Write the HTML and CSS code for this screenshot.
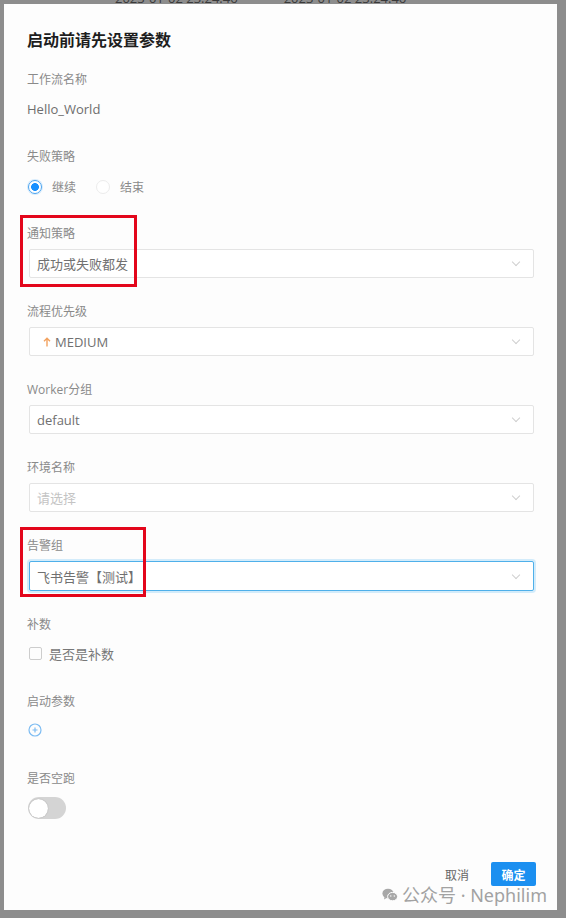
FILE: index.html
```html
<!DOCTYPE html>
<html lang="zh-CN">
<head>
    <meta charset="UTF-8">
    <meta name="viewport" content="width=device-width, initial-scale=1.0">
    <title>启动前请先设置参数</title>
    <link rel="stylesheet" href="styles.css">
</head>
<body>
    <div class="backdrop-row">
        <span class="backdrop-time">2023-01-02 23:24:46</span>
        <span class="backdrop-time">2023-01-02 23:24:46</span>
    </div>

    <div class="modal">
        <h2 class="modal-title">启动前请先设置参数</h2>

        <div class="field field-top">
            <div class="field-label">工作流名称</div>
            <div class="field-text">Hello_World</div>
        </div>

        <div class="field field-radio">
            <div class="field-label">失败策略</div>
            <div class="radio-group">
                <label class="radio checked"><span class="radio-dot"></span>继续</label>
                <label class="radio"><span class="radio-dot"></span>结束</label>
            </div>
        </div>

        <div class="field marked">
            <div class="field-label">通知策略</div>
            <div class="select">
                <span class="select-value">成功或失败都发</span>
                <span class="chevron"></span>
            </div>
            <div class="mark mark-notify"></div>
        </div>

        <div class="field">
            <div class="field-label">流程优先级</div>
            <div class="select">
                <span class="select-value">
                    <svg class="priority-icon" width="8" height="10" viewBox="0 0 8 10">
                        <path d="M4 1.2 V9.5 M1 4.2 L4 1.2 L7 4.2" fill="none" stroke="#f2a25f" stroke-width="1.4"/>
                    </svg>
                    MEDIUM
                </span>
                <span class="chevron"></span>
            </div>
        </div>

        <div class="field">
            <div class="field-label">Worker分组</div>
            <div class="select">
                <span class="select-value">default</span>
                <span class="chevron"></span>
            </div>
        </div>

        <div class="field">
            <div class="field-label">环境名称</div>
            <div class="select">
                <span class="select-value placeholder">请选择</span>
                <span class="chevron"></span>
            </div>
        </div>

        <div class="field marked">
            <div class="field-label">告警组</div>
            <div class="select focused">
                <span class="select-value">飞书告警【测试】</span>
                <span class="chevron"></span>
            </div>
            <div class="mark mark-alert"></div>
        </div>

        <div class="field field-compact">
            <div class="field-label">补数</div>
            <label class="checkbox"><span class="checkbox-box"></span>是否是补数</label>
        </div>

        <div class="field field-compact">
            <div class="field-label">启动参数</div>
            <div class="icon-row">
                <svg width="14" height="14" viewBox="0 0 14 14">
                    <circle cx="7" cy="7" r="6" fill="none" stroke="#7dbcf2" stroke-width="1.2"/>
                    <path d="M7 4.5 V9.5 M4.5 7 H9.5" stroke="#7dbcf2" stroke-width="1.2"/>
                </svg>
            </div>
        </div>

        <div class="field field-compact">
            <div class="field-label">是否空跑</div>
            <div class="switch"><span class="switch-knob"></span></div>
        </div>

        <div class="modal-footer">
            <button class="btn btn-text">取消</button>
            <button class="btn btn-primary">确定</button>
        </div>

        <div class="watermark">
            <svg width="16" height="14" viewBox="0 0 16 14">
                <ellipse cx="6" cy="5.5" rx="5.6" ry="4.8" fill="#a8a8a8"/>
                <path d="M2.5 9 L2 11.5 L5 9.8 Z" fill="#a8a8a8"/>
                <ellipse cx="10.6" cy="8.6" rx="5" ry="4.2" fill="#a8a8a8" stroke="#fff" stroke-width="1"/>
                <circle cx="8.8" cy="8" r="0.7" fill="#fff"/>
                <circle cx="12.3" cy="8" r="0.7" fill="#fff"/>
            </svg>
            <span>公众号 · Nephilim</span>
        </div>
    </div>
</body>
</html>
```

FILE: styles.css
```css
body {
    margin: 0;
    background-color: #8d8d8d;
    font-family: "Open Sans", "Noto Sans CJK SC", sans-serif;
    height: 918px;
    overflow: hidden;
}

.backdrop-row {
    height: 4px;
    overflow: hidden;
    display: flex;
    align-items: flex-end;
    gap: 46px;
    padding-left: 115px;
}

.backdrop-time {
    font-size: 13px;
    line-height: 12px;
    color: #3a3a3a;
    flex-shrink: 0;
}

.modal {
    position: relative;
    margin-left: 4px;
    width: 553px;
    height: 906px;
    box-sizing: border-box;
    background-color: #fdfdfd;
    padding: 24px 23px 0 25px;
    display: flex;
    flex-direction: column;
}

.modal-title {
    margin: 0 0 16px -2px;
    font-size: 16px;
    line-height: 24px;
    font-weight: bold;
    color: #1e1e1e;
}

.field {
    position: relative;
    margin-bottom: 22px;
}

.field-top {
    margin-bottom: 26px;
}

.field-compact {
    margin-bottom: 27px;
}

.field-label {
    margin-left: -2px;
    padding-top: 2px;
    font-size: 12px;
    line-height: 20px;
    color: #8a8a8a;
    margin-bottom: 5px;
}

.field-top .field-label {
    margin-bottom: 9px;
}

.field-radio .field-label {
    margin-bottom: 10px;
}

.field-compact .field-label {
    margin-bottom: 8px;
}

.field-text {
    margin-left: -2px;
    font-size: 13px;
    line-height: 20px;
    color: #6e6e6e;
}

.radio-group {
    display: flex;
    align-items: center;
    gap: 20px;
    height: 20px;
    margin-left: -1px;
    margin-bottom: 3px;
}

.radio {
    display: flex;
    align-items: center;
    gap: 10px;
    font-size: 12px;
    color: #8a8a8a;
}

.radio-dot {
    width: 12px;
    height: 12px;
    border-radius: 50%;
    border: 1px solid #ececec;
    background-color: #fff;
    box-sizing: content-box;
}

.radio.checked .radio-dot {
    border-color: #4aa3ee;
    background: radial-gradient(circle, #1890ff 0 3.6px, #fff 4.2px);
    box-shadow: 0 0 0 1px #d6ebfc;
}

.select {
    height: 29px;
    box-sizing: border-box;
    border: 1px solid #e4e4e4;
    border-radius: 2px;
    background-color: #fff;
    display: flex;
    align-items: center;
    justify-content: space-between;
    padding: 0 14px 0 7px;
}

.select.focused {
    height: 30px;
    border-color: #4fb0ea;
    box-shadow: 0 0 0 2px #d3ecfb;
}

.select-value {
    display: flex;
    align-items: center;
    gap: 4px;
    font-size: 13px;
    color: #707070;
}

.priority-icon {
    margin-left: 6px;
}

.select-value.placeholder {
    color: #c4c4c4;
}

.chevron {
    width: 5px;
    height: 5px;
    border-right: 1px solid #cfcfcf;
    border-bottom: 1px solid #cfcfcf;
    transform: rotate(45deg);
    margin-top: -3px;
}

.mark {
    position: absolute;
    left: -9px;
    top: -7px;
    border: 3px solid #e3061b;
    box-sizing: border-box;
}

.mark-notify {
    width: 117px;
    height: 72px;
}

.mark-alert {
    width: 126px;
    height: 70px;
}

.checkbox {
    display: flex;
    align-items: center;
    gap: 7px;
    height: 20px;
    font-size: 13px;
    color: #777;
}

.checkbox-box {
    width: 11px;
    height: 11px;
    border: 1px solid #cdcdcd;
    border-radius: 2px;
}

.icon-row {
    height: 20px;
    display: flex;
    align-items: center;
    margin-left: -1px;
}

.switch {
    width: 38px;
    height: 22px;
    border-radius: 11px;
    background-color: #d4d4d4;
    display: flex;
    align-items: center;
    padding-left: 1px;
    box-sizing: border-box;
    margin-left: -1px;
}

.switch-knob {
    width: 19px;
    height: 19px;
    border-radius: 50%;
    background-color: #fff;
    box-shadow: 0 0 1px rgba(0, 0, 0, 0.35);
}

.modal-footer {
    margin-top: 16px;
    display: flex;
    justify-content: flex-end;
    align-items: center;
    gap: 22px;
    margin-right: -2px;
}

.btn {
    font-family: "Noto Sans CJK SC", sans-serif;
    font-size: 12px;
    border: none;
    cursor: pointer;
}

.btn-text {
    background: none;
    color: #666;
    padding: 0;
}

.btn-primary {
    width: 45px;
    height: 24px;
    border-radius: 2px;
    background-color: #1b8ff0;
    color: #fff;
    font-weight: bold;
    padding: 0;
}

.watermark {
    position: absolute;
    left: 378px;
    top: 880px;
    display: flex;
    align-items: center;
    gap: 4px;
    font-family: "Noto Sans", "Noto Sans CJK SC", sans-serif;
    font-size: 18px;
    line-height: 22px;
    color: #a2a2a2;
}
```
